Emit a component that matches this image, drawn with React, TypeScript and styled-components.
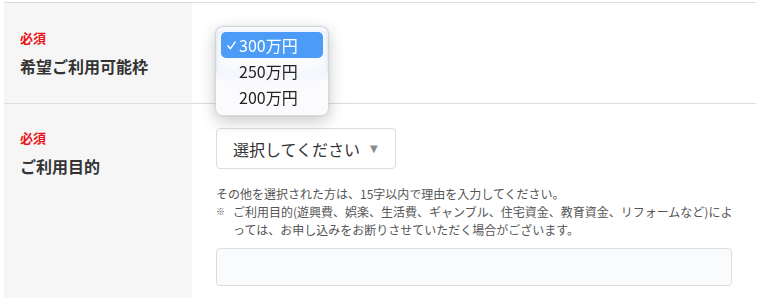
import React from "react";
import styled, { createGlobalStyle } from "styled-components";

const GlobalStyle = createGlobalStyle`
  html, body {
    margin: 0;
    padding: 0;
    background: #ffffff;
  }
  body {
    font-family: "Noto Sans CJK JP", "Noto Sans", sans-serif;
    color: #333333;
  }
`;

const Page = styled.div`
  padding: 2px 4px 0 4px;
`;

const FormTable = styled.div`
  border-top: 1px solid #dddddd;
`;

const Row = styled.div`
  display: grid;
  grid-template-columns: 188px 1fr;
  border-bottom: 1px solid #dddddd;
`;

const LabelCell = styled.div<{ $center?: boolean }>`
  background: #f6f6f6;
  padding: 24px 16px;
  display: flex;
  flex-direction: column;
  justify-content: ${(p) => (p.$center ? "center" : "flex-start")};
  gap: 6px;
`;

const Required = styled.span`
  color: #e8141b;
  font-size: 13px;
  font-weight: 700;
  line-height: 20px;
`;

const LabelText = styled.span`
  color: #333333;
  font-size: 16px;
  font-weight: 700;
  line-height: 24px;
`;

const FieldCell = styled.div<{ $compact?: boolean }>`
  padding: ${(p) => (p.$compact ? "0 24px" : "24px 24px 12px")};
  min-height: ${(p) => (p.$compact ? "100px" : "auto")};
  display: flex;
  flex-direction: column;
  justify-content: ${(p) => (p.$compact ? "center" : "flex-start")};
  align-items: flex-start;
`;

const SelectAnchor = styled.div`
  position: relative;
`;

const FocusedSelect = styled.div`
  box-sizing: border-box;
  width: 112px;
  height: 44px;
  border: 2px solid #3b82f0;
  border-radius: 5px;
  background: #ffffff;
`;

const Popup = styled.div`
  position: absolute;
  left: -1px;
  top: -5px;
  width: 114px;
  box-sizing: border-box;
  padding: 5px;
  border-radius: 8px;
  background: rgba(250, 250, 252, 0.8);
  backdrop-filter: blur(5px);
  border: 0.5px solid rgba(0, 0, 0, 0.14);
  box-shadow: 0 5px 16px rgba(0, 0, 0, 0.22), 0 0 2px rgba(0, 0, 0, 0.1);
  display: flex;
  flex-direction: column;
`;

const Option = styled.div<{ $selected?: boolean }>`
  position: relative;
  height: 26px;
  line-height: 26px;
  padding-left: 18px;
  border-radius: 5px;
  font-size: 16px;
  color: ${(p) => (p.$selected ? "#ffffff" : "#222222")};
  background: ${(p) => (p.$selected ? "#4c9bf6" : "transparent")};
`;

const CheckMark = styled.svg`
  position: absolute;
  left: 6px;
  top: 9px;
`;

const SelectBox = styled.div`
  box-sizing: border-box;
  width: 180px;
  height: 41px;
  border: 1px solid #dddddd;
  border-radius: 4px;
  background: #ffffff;
  display: flex;
  align-items: center;
  padding-left: 16px;
  font-size: 16px;
  color: #333333;
`;

const Arrow = styled.span`
  margin-left: 10px;
  font-size: 10px;
  color: #8a8a8a;
  font-family: "DejaVu Sans", sans-serif;
`;

const HelpBlock = styled.div`
  margin-top: 16px;
  width: 100%;
  font-size: 12px;
  line-height: 18px;
  color: #555555;
`;

const HelpLine = styled.div`
  white-space: nowrap;
`;

const Note = styled.div`
  display: flex;
`;

const NoteMark = styled.span`
  flex: 0 0 17px;
  font-size: 9px;
`;

const NoteText = styled.span`
  white-space: nowrap;
`;

const TextInput = styled.input`
  box-sizing: border-box;
  margin-top: 9px;
  width: 516px;
  height: 38px;
  border: 1px solid #dddddd;
  border-radius: 4px;
  background: #fafbfd;
  outline: none;
`;

const options = [
  { label: "300万円", selected: true },
  { label: "250万円", selected: false },
  { label: "200万円", selected: false },
];

export default function App() {
  return (
    <>
      <GlobalStyle />
      <Page>
        <FormTable>
          <Row>
            <LabelCell $center>
              <Required>必須</Required>
              <LabelText>希望ご利用可能枠</LabelText>
            </LabelCell>
            <FieldCell $compact>
              <SelectAnchor>
                <FocusedSelect />
                <Popup>
                  {options.map((o) => (
                    <Option key={o.label} $selected={o.selected}>
                      {o.selected && (
                        <CheckMark width="9" height="9" viewBox="0 0 9 9">
                          <polyline
                            points="0.8,4.8 3.3,7.8 8.2,0.8"
                            fill="none"
                            stroke="#ffffff"
                            strokeWidth="1.4"
                            strokeLinecap="round"
                            strokeLinejoin="round"
                          />
                        </CheckMark>
                      )}
                      {o.label}
                    </Option>
                  ))}
                </Popup>
              </SelectAnchor>
            </FieldCell>
          </Row>
          <Row>
            <LabelCell>
              <Required>必須</Required>
              <LabelText>ご利用目的</LabelText>
            </LabelCell>
            <FieldCell>
              <SelectBox>
                選択してください<Arrow>▼</Arrow>
              </SelectBox>
              <HelpBlock>
                <HelpLine>その他を選択された方は、15字以内で理由を入力してください。</HelpLine>
                <Note>
                  <NoteMark>※</NoteMark>
                  <NoteText>
                    ご利用目的(遊興費、娯楽、生活費、ギャンブル、住宅資金、教育資金、リフォームなど)によ
                    <br />
                    っては、お申し込みをお断りさせていただく場合がございます。
                  </NoteText>
                </Note>
              </HelpBlock>
              <TextInput type="text" />
            </FieldCell>
          </Row>
        </FormTable>
      </Page>
    </>
  );
}
